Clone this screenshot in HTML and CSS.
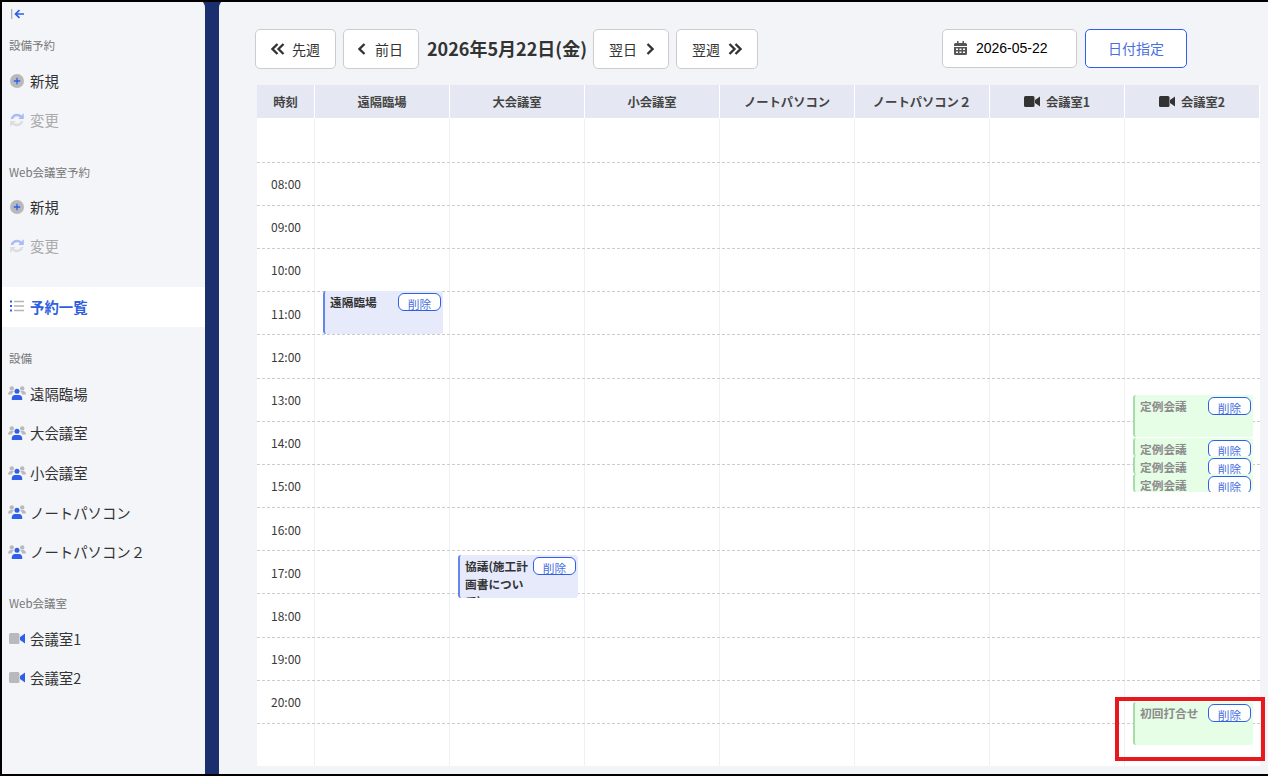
FILE: index.html
```html
<!DOCTYPE html>
<html lang="ja">
<head>
    <meta charset="UTF-8">
    <meta name="viewport" content="width=device-width, initial-scale=1.0">
    <title>予約一覧</title>
    <link rel="stylesheet" href="styles.css">
</head>
<body>
    <svg class="icon-defs" aria-hidden="true">
        <symbol id="i-plus" viewBox="0 0 14 14">
            <circle cx="7" cy="7" r="7" fill="#b9b9bc"/>
            <path d="M7 3.8v6.4M3.8 7h6.4" stroke="#2f5fe8" stroke-width="1.3"/>
        </symbol>
        <symbol id="i-sync" viewBox="0 0 14 14">
            <path d="M.6 6C1.300 2.800 3.800.8 7 .8c1.800 0 3.300.7 4.400 1.800L13.800.3V6H8.200l1.700-1.700C9.100 3.600 8.100 3.200 7 3.200 5.200 3.200 3.700 4.300 3.200 6z" fill="#a9bcf5"/>
            <path d="M13.400 8c-.7 3.200-3.200 5.200-6.400 5.200-1.800 0-3.300-.7-4.400-1.800L.2 13.700V8h5.600L4.100 9.700c.8.700 1.800 1.100 2.900 1.100 1.800 0 3.300-1.100 3.800-2.800z" fill="#dcdde0"/>
        </symbol>
        <symbol id="i-list" viewBox="0 0 14 12">
            <path d="M4 1.500h10M4 6h10M4 10.500h10" stroke="#b5b5b8" stroke-width="1.600"/>
            <path d="M0 .4h2v2H0zM0 5h2v2H0zM0 9.500h2v2H0z" fill="#2f5fe8"/>
        </symbol>
        <symbol id="i-users" viewBox="0 0 18 14">
            <circle cx="3.800" cy="2.400" r="2.200" fill="#b9b9bc"/>
            <circle cx="14.200" cy="2.400" r="2.200" fill="#b9b9bc"/>
            <path d="M0 8.500C0 6.300 1.300 5 3 5h1.600c.5 0 1 .2 1.300.5C4.800 6.200 4 7.300 3.800 8.500zM18 8.500c0-2.200-1.300-3.500-3-3.500h-1.600c-.5 0-1 .2-1.300.5 1.100.7 1.900 1.800 2.100 3z" fill="#b9b9bc"/>
            <circle cx="9" cy="5.300" r="2.500" fill="#2f5fe8"/>
            <path d="M3.800 14v-1.500c0-2 1.400-3.500 3-3.500h4.400c1.600 0 3 1.500 3 3.500V14z" fill="#2f5fe8"/>
        </symbol>
        <symbol id="i-video" viewBox="0 0 16 11">
            <rect width="10.500" height="11" rx="1.500" fill="var(--video-body, #b9b9bc)"/>
            <path d="M11 4 16 .6v9.800L11 7z" fill="var(--video-lens, #2f5fe8)"/>
        </symbol>
        <symbol id="i-back" viewBox="0 0 14 10">
            <path d="M.7 0v10" stroke="#a8a8ac" stroke-width="1.200"/>
            <path d="M13 5H5.500M8.500 1.200 4.500 5l4 3.800" fill="none" stroke="#2f5fe8" stroke-width="1.700"/>
        </symbol>
    </svg>

    <aside class="sidebar">
        <div class="toggle"><svg class="toggle-icon"><use href="#i-back"/></svg></div>

        <p class="nav-label">設備予約</p>
        <a class="nav-item compact"><span class="nav-icon"><svg class="ic-plus"><use href="#i-plus"/></svg></span>新規</a>
        <a class="nav-item compact disabled"><span class="nav-icon"><svg class="ic-plus"><use href="#i-sync"/></svg></span>変更</a>

        <p class="nav-label label-web">Web会議室予約</p>
        <a class="nav-item compact"><span class="nav-icon"><svg class="ic-plus"><use href="#i-plus"/></svg></span>新規</a>
        <a class="nav-item compact disabled"><span class="nav-icon"><svg class="ic-plus"><use href="#i-sync"/></svg></span>変更</a>

        <a class="nav-item active"><span class="nav-icon"><svg class="ic-list"><use href="#i-list"/></svg></span>予約一覧</a>

        <p class="nav-label label-equip">設備</p>
        <a class="nav-item"><span class="nav-icon"><svg class="ic-users"><use href="#i-users"/></svg></span>遠隔臨場</a>
        <a class="nav-item"><span class="nav-icon"><svg class="ic-users"><use href="#i-users"/></svg></span>大会議室</a>
        <a class="nav-item"><span class="nav-icon"><svg class="ic-users"><use href="#i-users"/></svg></span>小会議室</a>
        <a class="nav-item"><span class="nav-icon"><svg class="ic-users"><use href="#i-users"/></svg></span>ノートパソコン</a>
        <a class="nav-item"><span class="nav-icon"><svg class="ic-users"><use href="#i-users"/></svg></span>ノートパソコン２</a>

        <p class="nav-label label-webroom">Web会議室</p>
        <a class="nav-item"><span class="nav-icon"><svg class="ic-video"><use href="#i-video"/></svg></span>会議室1</a>
        <a class="nav-item"><span class="nav-icon"><svg class="ic-video"><use href="#i-video"/></svg></span>会議室2</a>
    </aside>

    <div class="splitter"></div>

    <main class="main">
        <div class="toolbar">
            <button class="btn btn-week">
                <svg class="chev-double" viewBox="0 0 14 12"><path d="M6.500 1 1.500 6l5 5M12.500 1l-5 5 5 5"/></svg>
                先週
            </button>
            <button class="btn btn-day">
                <svg class="chev" viewBox="0 0 8 12"><path d="M6.500 1 1.500 6l5 5"/></svg>
                前日
            </button>
            <h1 class="date-title">2026年5月22日(金)</h1>
            <button class="btn btn-day-next">
                翌日
                <svg class="chev" viewBox="0 0 8 12"><path d="M1.500 1l5 5-5 5"/></svg>
            </button>
            <button class="btn btn-week-next">
                翌週
                <svg class="chev-double" viewBox="0 0 14 12"><path d="M1.500 1l5 5-5 5M7.500 1l5 5-5 5"/></svg>
            </button>
            <div class="date-input">
                <svg class="cal-icon" viewBox="0 0 13 14"><path d="M3 0h1.500v2h4V0H10v2h1.500A1.500 1.500 0 0 1 13 3.500V5H0V3.500A1.500 1.500 0 0 1 1.500 2H3zM0 6h13v6.500a1.500 1.500 0 0 1-1.500 1.500h-10A1.500 1.500 0 0 1 0 12.500zm2 1.500v1.500h2V7.500zm3.500 0v1.500h2V7.500zm3.500 0v1.500h2V7.500zM2 10.500V12h2v-1.500zm3.500 0V12h2v-1.500zm3.500 0V12h2v-1.500z" fill-rule="evenodd"/></svg>
                <span>2026-05-22</span>
            </div>
            <button class="btn btn-primary">日付指定</button>
        </div>

        <div class="schedule">
            <div class="head">
                <div class="head-cell">時刻</div>
                <div class="head-cell">遠隔臨場</div>
                <div class="head-cell">大会議室</div>
                <div class="head-cell">小会議室</div>
                <div class="head-cell">ノートパソコン</div>
                <div class="head-cell">ノートパソコン２</div>
                <div class="head-cell"><svg class="ic-video"><use href="#i-video"/></svg>会議室1</div>
                <div class="head-cell"><svg class="ic-video"><use href="#i-video"/></svg>会議室2</div>
            </div>
            <div class="rows">
                <div class="row"><div class="time"></div></div>
                <div class="row"><div class="time">08:00</div></div>
                <div class="row"><div class="time">09:00</div></div>
                <div class="row"><div class="time">10:00</div></div>
                <div class="row">
                    <div class="time">11:00</div>
                    <div class="event room1 at-0">
                        <span class="event-title">遠隔臨場</span>
                        <button class="del">削除</button>
                    </div>
                </div>
                <div class="row"><div class="time">12:00</div></div>
                <div class="row">
                    <div class="time">13:00</div>
                    <div class="event web2 green tall at-16">
                        <span class="event-title">定例会議</span>
                        <button class="del">削除</button>
                    </div>
                </div>
                <div class="row">
                    <div class="time">14:00</div>
                    <div class="event web2 green short at-16">
                        <span class="event-title">定例会議</span>
                        <button class="del">削除</button>
                    </div>
                    <div class="event web2 green short at-34">
                        <span class="event-title">定例会議</span>
                        <button class="del">削除</button>
                    </div>
                </div>
                <div class="row">
                    <div class="time">15:00</div>
                    <div class="event web2 green short at-9">
                        <span class="event-title">定例会議</span>
                        <button class="del">削除</button>
                    </div>
                </div>
                <div class="row"><div class="time">16:00</div></div>
                <div class="row">
                    <div class="time">17:00</div>
                    <div class="event room2 at-4">
                        <span class="event-title">協議(施工計画書について)</span>
                        <button class="del">削除</button>
                    </div>
                </div>
                <div class="row"><div class="time">18:00</div></div>
                <div class="row"><div class="time">19:00</div></div>
                <div class="row">
                    <div class="time">20:00</div>
                    <div class="event web2 green at-21">
                        <span class="event-title">初回打合せ</span>
                        <button class="del">削除</button>
                    </div>
                </div>
                <div class="row last"><div class="time"></div></div>
            </div>
        </div>
    </main>

    <div class="callout"></div>
</body>
</html>
```

FILE: styles.css
```css
* {
    box-sizing: border-box;
}

html, body {
    height: 100%;
}

body {
    margin: 0;
    display: flex;
    height: 776px;
    overflow: hidden;
    border: solid #000;
    border-width: 2px 0 2px 2px;
    background: #f2f4f8;
    color: #333;
    font-family: "Noto Sans CJK JP", "Noto Sans", sans-serif;
}

.icon-defs {
    display: none;
}

/* sidebar */
.sidebar {
    flex: 0 0 203px;
    background: #f3f5f9;
}

.toggle {
    display: flex;
    align-items: center;
    height: 24px;
    padding-left: 9px;
}

.toggle-icon {
    width: 14px;
    height: 10px;
}

.nav-label {
    height: 24px;
    margin: 7px 0 4px;
    padding-left: 7px;
    line-height: 24px;
    font-size: 11.5px;
    color: #777;
}

.nav-label.label-web { margin: 21px 0 3px; }
.nav-label.label-equip { margin: 19px 0 3.3px; }
.nav-label.label-webroom { margin: 19.2px 0 3.5px; }

.nav-item {
    display: flex;
    align-items: center;
    height: 39.7px;
    padding-left: 5px;
    font-size: 14.4px;
    color: #333;
}

.nav-item.compact {
    height: 39px;
}

.nav-item.disabled {
    color: #aaa;
}

.nav-item.active {
    height: 40px;
    margin-top: 22px;
    padding-bottom: 2px;
    background: #fff;
    color: #2f5fe0;
    font-weight: 700;
}

.nav-icon {
    display: flex;
    justify-content: center;
    align-items: center;
    flex: 0 0 20px;
    margin-right: 3px;
}

.ic-plus { width: 14px; height: 14px; }
.ic-list { width: 14px; height: 12px; }
.ic-users { width: 18px; height: 14px; }
.ic-video { width: 16px; height: 11px; }

/* splitter */
.splitter {
    position: relative;
    flex: 0 0 14px;
    background: #1b2f6e;
}

.splitter::before {
    content: "";
    position: absolute;
    top: 0;
    left: -2px;
    width: 18px;
    height: 6px;
    background: #1b2f6e;
    clip-path: polygon(0 0, 100% 0, 90% 60%, 89% 100%, 11% 100%, 10% 60%);
}

/* main */
.main {
    flex: 1;
    min-width: 0;
}

.toolbar {
    display: flex;
    align-items: flex-start;
    height: 40px;
    margin: 27px 0 16px 36px;
}

.btn {
    display: flex;
    align-items: center;
    height: 40px;
    padding: 0 15px;
    border: 1px solid #ccc;
    border-radius: 5px;
    background: #fff;
    color: #333;
    font-family: inherit;
    font-size: 14px;
}

.btn-week { gap: 7px; margin-right: 7px; }
.btn-day { gap: 9px; padding-left: 14px; }
.btn-day-next { gap: 9px; margin-right: 7px; padding-right: 14px; }
.btn-week-next { gap: 8px; }

.btn svg {
    fill: none;
    stroke: #333;
    stroke-width: 2.3;
}

.chev {
    width: 8px;
    height: 12px;
}

.chev-double {
    width: 14px;
    height: 12px;
}

.date-title {
    height: 39px;
    margin: 0 6px 0 8px;
    line-height: 39px;
    font-size: 18px;
    font-weight: 700;
    color: #333;
    white-space: nowrap;
}

.date-input {
    display: flex;
    align-items: center;
    gap: 9px;
    width: 135px;
    height: 39px;
    margin-left: 184px;
    padding-left: 11px;
    padding-bottom: 1px;
    border: 1px solid #ccc;
    border-radius: 5px;
    background: #fff;
    color: #000;
    font-family: "Liberation Sans", sans-serif;
    font-size: 14px;
}

.cal-icon {
    width: 13px;
    height: 14px;
    fill: #555;
}

.btn-primary {
    justify-content: center;
    width: 102px;
    height: 39px;
    margin-left: 8px;
    padding-bottom: 1px;
    border-color: #2f5fe8;
    color: #4a6fe0;
}

/* schedule */
.schedule {
    width: 1003px;
    margin-left: 38px;
}

.head {
    display: grid;
    grid-template-columns: 58px repeat(7, 135px);
    height: 33px;
    background: #e5e8f2;
}

.head-cell {
    display: flex;
    justify-content: center;
    align-items: center;
    gap: 6px;
    border-right: 1px solid #fff;
    font-size: 12.3px;
    font-weight: 700;
    color: #444;
    --video-body: #333;
    --video-lens: #333;
}

.rows {
    background-color: #fff;
    background-image: repeating-linear-gradient(to right, #eff1f4 0 1px, transparent 1px 135px);
    background-size: 945px 100%;
    background-position: 57px 0;
    background-repeat: no-repeat;
}

.row {
    position: relative;
    height: 43.2px;
    border-bottom: 1px dashed #ccc;
}

.row:first-child {
    height: 44.6px;
}

.row.last {
    height: 41.8px;
    border-bottom: 0;
}

.time {
    display: flex;
    align-items: center;
    justify-content: center;
    width: 58px;
    height: 100%;
    padding-bottom: 0.3px;
    font-size: 12px;
    color: #3a3a3a;
}

/* events lie over the grid */
.event {
    position: absolute;
    display: flex;
    justify-content: space-between;
    align-items: flex-start;
    width: 120px;
    height: 43px;
    padding: 2px 2px 0 5px;
    overflow: hidden;
    border-left: 2px solid #6485ea;
    border-radius: 3px;
    background: #e7eafb;
}

.event.room1 { left: 66px; }
.event.room2 { left: 201px; }
.event.web2 { left: 876px; }

.event.green {
    border-left-color: #a9dba9;
    background: #e6fde6;
}

.event.tall { height: 42px; }
.event.short { height: 18px; }
.event.at-0 { top: -1px; }
.event.at-4 { top: 4px; }
.event.at-9 { top: 9px; }
.event.at-16 { top: 16px; }
.event.at-21 { top: 21px; }
.event.at-34 { top: 34px; }

.event-title {
    width: 68px;
    font-size: 11.7px;
    font-weight: 700;
    line-height: 17.5px;
    color: #333;
}

.event.green .event-title {
    white-space: nowrap;
    color: #8c8c8c;
}

.del {
    flex: 0 0 43px;
    height: 18px;
    padding: 2px 0 0;
    border: 1px solid #2f5fe8;
    border-radius: 6px;
    background: #fff;
    color: #4a6fe0;
    font-family: inherit;
    font-size: 11.7px;
    line-height: 16px;
}

/* red annotation drawn over the screenshot */
.callout {
    position: absolute;
    left: 1115px;
    top: 697px;
    width: 150px;
    height: 64px;
    border: 4px solid #e8191c;
}
```
